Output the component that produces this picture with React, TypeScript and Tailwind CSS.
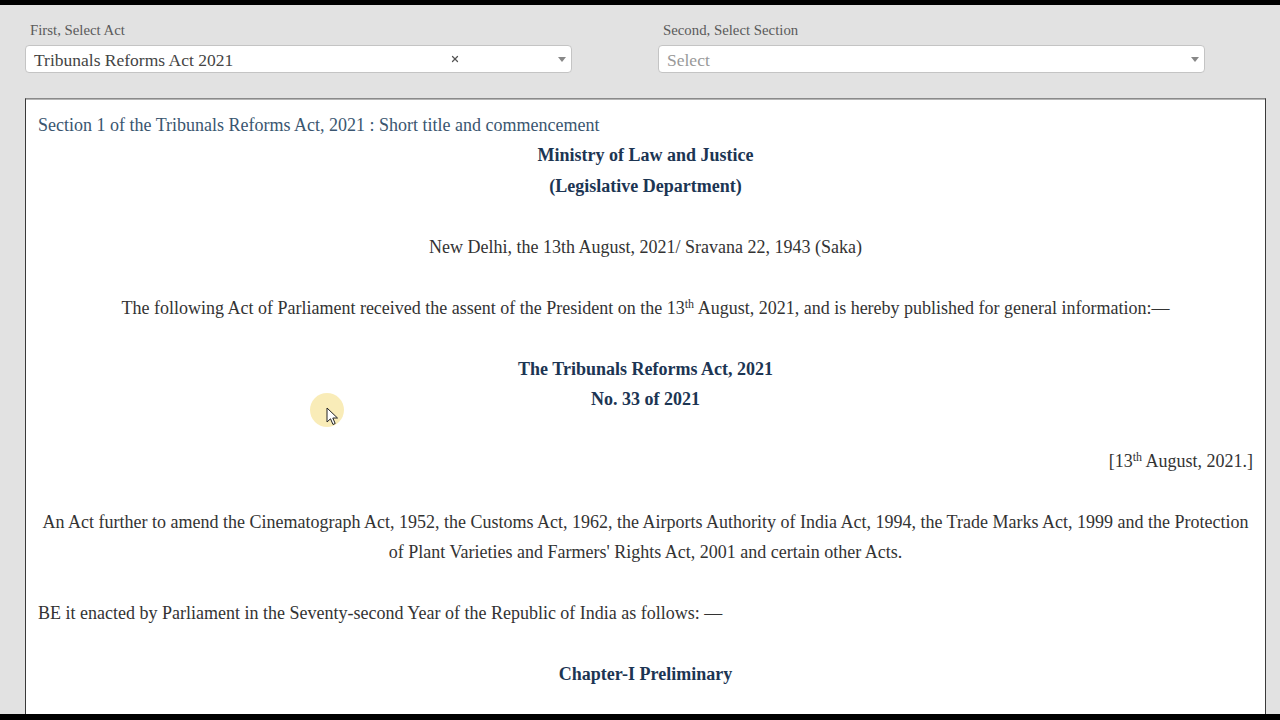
import { X } from "lucide-react";

function SelectBox({ value, placeholder, clearable }: { value?: string; placeholder?: string; clearable?: boolean }) {
  return (
    <div className="mt-[7px] h-[28px] rounded-[4px] border border-[#c4c4c4] bg-white flex items-center pl-[8px] pr-[5px]">
      {value ? (
        <span className="text-[17.5px] text-[#444] leading-none mt-[3px]">{value}</span>
      ) : (
        <span className="text-[17.5px] text-[#999] leading-none mt-[3px]">{placeholder}</span>
      )}
      {clearable && <X className="ml-auto mr-[98px] size-[10px] text-[#555]" strokeWidth={3} />}
      <span
        className={
          (clearable ? "" : "ml-auto ") +
          "w-0 h-0 border-l-[4px] border-r-[4px] border-t-[5px] border-l-transparent border-r-transparent border-t-[#888]"
        }
      />
    </div>
  );
}

function Cursor() {
  return (
    <div className="absolute left-[310px] top-[388px] pointer-events-none">
      <div className="size-[34px] rounded-full bg-[#f7e7a6] opacity-80" />
      <svg className="absolute left-[16px] top-[14px]" width="14" height="20" viewBox="0 0 14 20">
        <path d="M1 1 L1 15 L4.5 11.8 L7 17.5 L9.2 16.5 L6.8 11 L11.5 11 Z" fill="#fff" stroke="#222" strokeWidth="1" strokeLinejoin="round" />
      </svg>
    </div>
  );
}

export default function App() {
  const line = "leading-[30.55px]";
  const gap = "h-[30.55px]";
  return (
    <div className="h-[720px] w-[1280px] overflow-hidden bg-black font-['Liberation_Serif',serif]">
      <div className="relative mt-[5px] h-[709px] bg-[#e2e2e2] flex flex-col overflow-hidden">
        <div className="pt-[17px] pl-[25px] flex">
          <div className="w-[547px]">
            <div className="ml-[5px] text-[14.8px] leading-[16px] text-[#5a5a5a]">First, Select Act</div>
            <SelectBox value="Tribunals Reforms Act 2021" clearable />
          </div>
          <div className="ml-[86px] w-[547px]">
            <div className="ml-[5px] text-[14.8px] leading-[16px] text-[#5a5a5a]">Second, Select Section</div>
            <SelectBox placeholder="Select" />
          </div>
        </div>

        <div className="mt-[25px] ml-[25px] w-[1241px] flex-1 bg-white border border-[#3a3a3a] border-t-[#8a8a8a] border-b-0 shadow-[inset_0_1px_0_#b5b5b5] px-[12px] pt-[10.5px] text-[18px] text-[#333]">
          <div className={line + " text-[#3a5670]"}>
            Section 1 of the Tribunals Reforms Act, 2021 : Short title and commencement
          </div>
          <div className={line + " text-center font-bold text-[#1c3553]"}>Ministry of Law and Justice</div>
          <div className={line + " text-center font-bold text-[#1c3553]"}>(Legislative Department)</div>
          <div className={gap} />
          <div className={line + " text-center"}>New Delhi, the 13th August, 2021/ Sravana 22, 1943 (Saka)</div>
          <div className={gap} />
          <div className={line + " text-center"}>
            The following Act of Parliament received the assent of the President on the 13
            <sup className="text-[12px]">th</sup> August, 2021, and is hereby published for general information:—
          </div>
          <div className={gap} />
          <div className={line + " text-center font-bold text-[#1c3553]"}>The Tribunals Reforms Act, 2021</div>
          <div className={line + " text-center font-bold text-[#1c3553]"}>No. 33 of 2021</div>
          <div className={gap} />
          <div className={line + " text-right"}>
            [13<sup className="text-[12px]">th</sup> August, 2021.]
          </div>
          <div className={gap} />
          <div className={line + " text-center"}>
            <span className="whitespace-nowrap">
              An Act further to amend the Cinematograph Act, 1952, the Customs Act, 1962, the Airports Authority of India Act, 1994, the Trade Marks Act, 1999 and the Protection
            </span>
            <br />
            of Plant Varieties and Farmers' Rights Act, 2001 and certain other Acts.
          </div>
          <div className={gap} />
          <div className={line}>BE it enacted by Parliament in the Seventy-second Year of the Republic of India as follows: —</div>
          <div className={gap} />
          <div className={line + " text-center font-bold text-[#1c3553]"}>Chapter-I Preliminary</div>
        </div>

        <Cursor />
      </div>
    </div>
  );
}
